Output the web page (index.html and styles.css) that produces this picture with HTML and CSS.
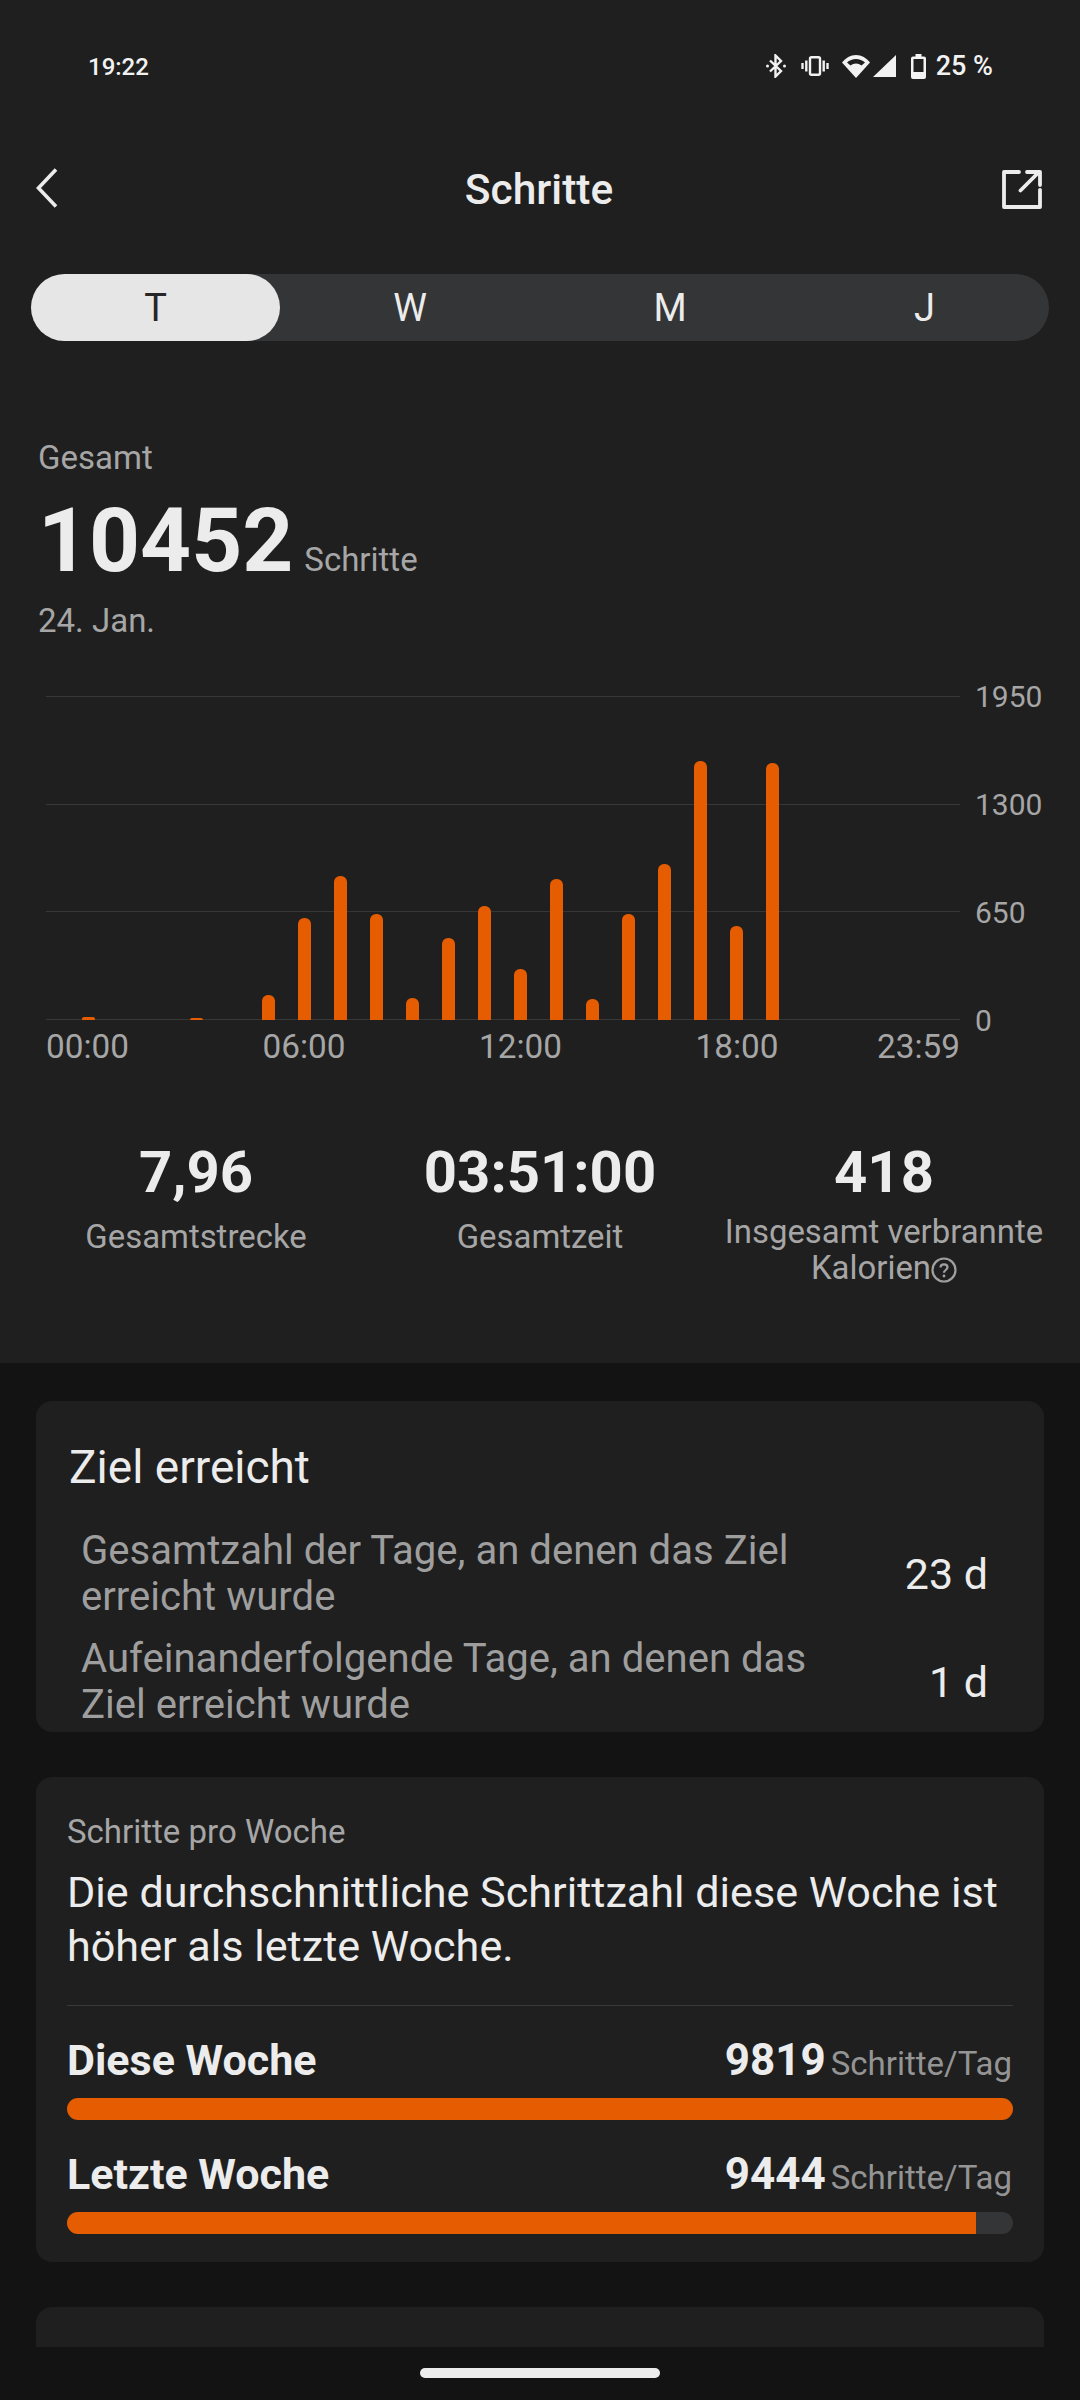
FILE: index.html
```html
<!DOCTYPE html>
<html lang="de">
<head>
    <meta charset="UTF-8">
    <meta name="viewport" content="width=device-width, initial-scale=1.0">
    <title>Schritte</title>
    <link rel="stylesheet" href="styles.css">
</head>
<body>
<div class="page">
    <div class="scroll">
        <section class="top">
            <div class="status-bar">
                <span class="status-time">19:22</span>
                <div class="status-icons">
                    <svg class="ic-bt" viewBox="0 0 20 24" width="20" height="24" fill="none" stroke="#f2f2f2" stroke-width="2.400"><path d="M4 6.500 15 17l-5.500 5.500v-21L15 7 4 17.500"/><circle cx="1.500" cy="12" r="1.500" fill="#f2f2f2" stroke="none"/><circle cx="18.500" cy="12" r="1.500" fill="#f2f2f2" stroke="none"/></svg>
                    <svg class="ic-vib" viewBox="0 0 28 20" width="28" height="20" fill="none" stroke="#f2f2f2" stroke-width="2.400"><rect x="9" y="1.200" width="10" height="17.600" rx="1.500"/><path d="M5.300 4.500v11M22.700 4.500v11M1.500 7v6M26.500 7v6"/></svg>
                    <svg class="ic-wifi" viewBox="0 0 28 23" width="28" height="23"><path d="M14 23 0 7.500C3.500 3 8.500 0 14 0s10.500 3 14 7.500z" fill="#f2f2f2"/><path d="M5 7.500C7.500 5.300 10.600 4 14 4s6.500 1.300 9 3.500L19.500 10.500C17.900 9.200 16 8.500 14 8.500s-3.900.7-5.500 2z" fill="#1f1f1f"/></svg>
                    <svg class="ic-signal" viewBox="0 0 23 22" width="23" height="22"><path d="M23 0v22H0z" fill="#f2f2f2"/></svg>
                    <svg class="ic-batt" viewBox="0 0 15 25" width="15" height="25"><path d="M4.500 0h6v2.500H13a2 2 0 0 1 2 2V23a2 2 0 0 1-2 2H2a2 2 0 0 1-2-2V4.500a2 2 0 0 1 2-2h2.500z" fill="#f2f2f2"/><rect x="2.500" y="5" width="10" height="13" fill="#1f1f1f"/></svg>
                    <span class="status-pct">25 %</span>
                </div>
            </div>

            <header class="title-bar">
                <svg class="back" viewBox="0 0 22 40" width="22" height="40" fill="none" stroke="#ececec" stroke-width="3.600"><path d="M20 1.500 2.500 20 20 38.500"/></svg>
                <h1>Schritte</h1>
                <svg class="share" viewBox="0 0 40 40" width="40" height="40" fill="none" stroke="#ececec" stroke-width="3.800" stroke-linecap="round" stroke-linejoin="round"><path d="M17 3H2v35h36V21M25 3h13v13M37 3 18.500 21.500"/></svg>
            </header>

            <div class="tabs">
                <div class="tab tab-active">T</div>
                <div class="tab tab-w">W</div>
                <div class="tab tab-m">M</div>
                <div class="tab tab-j">J</div>
            </div>

            <div class="summary">
                <div class="summary-label">Gesamt</div>
                <div class="summary-value"><strong>10452</strong><span>Schritte</span></div>
                <div class="summary-date">24. Jan.</div>
            </div>

            <div class="chart">
                <div class="plot">
                    <div class="gridlines"><i></i><i></i><i></i><i></i></div>
                    <div class="bars">
                        <div class="slot"><b class="bar-tiny" style="height:3px"></b></div>
                        <div class="slot"></div>
                        <div class="slot"></div>
                        <div class="slot"><b class="bar-tiny" style="height:2px"></b></div>
                        <div class="slot"></div>
                        <div class="slot"><b style="height:25px"></b></div>
                        <div class="slot"><b style="height:102px"></b></div>
                        <div class="slot"><b style="height:144px"></b></div>
                        <div class="slot"><b style="height:106px"></b></div>
                        <div class="slot"><b style="height:22px"></b></div>
                        <div class="slot"><b style="height:82px"></b></div>
                        <div class="slot"><b style="height:114px"></b></div>
                        <div class="slot"><b style="height:51px"></b></div>
                        <div class="slot"><b style="height:141px"></b></div>
                        <div class="slot"><b style="height:21px"></b></div>
                        <div class="slot"><b style="height:106px"></b></div>
                        <div class="slot"><b style="height:156px"></b></div>
                        <div class="slot"><b style="height:259px"></b></div>
                        <div class="slot"><b style="height:94px"></b></div>
                        <div class="slot"><b style="height:257px"></b></div>
                    </div>
                </div>
                <div class="y-axis">
                    <span>1950</span>
                    <span>1300</span>
                    <span>650</span>
                    <span>0</span>
                </div>
                <div class="x-axis">
                    <span>00:00</span>
                    <span>06:00</span>
                    <span>12:00</span>
                    <span>18:00</span>
                    <span class="x-last">23:59</span>
                </div>
            </div>

            <div class="stats">
                <div class="stat">
                    <div class="stat-value">7,96</div>
                    <div class="stat-label stat-single">Gesamtstrecke</div>
                </div>
                <div class="stat">
                    <div class="stat-value">03:51:00</div>
                    <div class="stat-label stat-single">Gesamtzeit</div>
                </div>
                <div class="stat">
                    <div class="stat-value">418</div>
                    <div class="stat-label">Insgesamt verbrannte Kalorien<svg class="help" viewBox="0 0 26 26" width="26" height="26" fill="none" stroke="#a0a0a0" stroke-width="2.200"><circle cx="13" cy="13" r="11.500"/><path d="M9.500 10.500c0-2 1.500-3.200 3.500-3.200s3.500 1.200 3.500 3c0 2.600-3.500 2.800-3.500 5.400"/><circle cx="13" cy="19" r="1.400" fill="#a0a0a0" stroke="none"/></svg></div>
                </div>
            </div>
        </section>

        <section class="card card-goal">
            <h2>Ziel erreicht</h2>
            <div class="goal-row">
                <div class="goal-text">Gesamtzahl der Tage, an denen das Ziel erreicht wurde</div>
                <div class="goal-value">23 d</div>
            </div>
            <div class="goal-row">
                <div class="goal-text">Aufeinanderfolgende Tage, an denen das Ziel erreicht wurde</div>
                <div class="goal-value">1 d</div>
            </div>
        </section>

        <section class="card card-week">
            <div class="week-label">Schritte pro Woche</div>
            <p class="week-text">Die durchschnittliche Schrittzahl diese Woche ist höher als letzte Woche.</p>
            <div class="divider"></div>
            <div class="week-row">
                <span class="week-name">Diese Woche</span>
                <span class="week-amount"><strong>9819</strong><span>Schritte/Tag</span></span>
            </div>
            <div class="progress"><div class="progress-fill" style="width:100%"></div></div>
            <div class="week-row">
                <span class="week-name">Letzte Woche</span>
                <span class="week-amount"><strong>9444</strong><span>Schritte/Tag</span></span>
            </div>
            <div class="progress"><div class="progress-fill" style="width:96.100%"></div></div>
        </section>

        <section class="card card-next"></section>
    </div>
    <div class="nav-bar"><div class="home-pill"></div></div>
</div>
</body>
</html>
```

FILE: styles.css
```css
* {
    box-sizing: border-box;
}

html, body {
    margin: 0;
    padding: 0;
}

body {
    font-family: Roboto, "Liberation Sans", sans-serif;
    background-color: #131313;
    color: #ececec;
}

.page {
    width: 1080px;
    height: 2400px;
    display: flex;
    flex-direction: column;
    overflow: hidden;
}

.scroll {
    flex: 1;
    min-height: 0;
    overflow: hidden;
}

.top {
    background-color: #1f1f1f;
    height: 1363px;
}

/* status bar */
.status-bar {
    height: 132px;
    padding: 2px 87px 0 88px;
    display: flex;
    align-items: center;
    justify-content: space-between;
    color: #f2f2f2;
    font-size: 24px;
    font-weight: 500;
}

.status-icons {
    display: flex;
    align-items: center;
    margin-top: -2px;
}

.status-icons svg {
    display: block;
}

.ic-bt {
    margin-right: 15px;
}

.ic-vib {
    margin-right: 13px;
}

.ic-wifi {
    margin-right: 3px;
}

.ic-signal {
    margin-right: 15px;
}

.status-pct {
    margin-left: 10px;
    font-size: 27px;
}

/* title */
.title-bar {
    height: 114px;
    padding: 0 38px 0 36px;
    display: grid;
    grid-template-columns: 1fr auto 1fr;
    align-items: center;
}

.title-bar h1 {
    margin: 0;
    font-size: 42.500px;
    font-weight: 500;
}

.back {
    margin-top: -2px;
}

.share {
    justify-self: end;
}

/* period tabs */
.tabs {
    margin: 28px 31px 0;
    height: 67px;
    border-radius: 34px;
    background-color: #343536;
    display: flex;
    font-size: 38px;
    line-height: 69px;
    text-align: center;
}

.tab {
    color: #ececec;
}

.tab-active {
    width: 249px;
    border-radius: 34px;
    background-color: #e6e6e6;
    color: #262626;
}

.tab-w {
    width: 260px;
}

.tab-m {
    width: 260px;
}

.tab-j {
    width: 249px;
}

/* summary */
.summary {
    margin: 99px 38px 0;
}

.summary-label {
    font-size: 33px;
    line-height: 36px;
    color: #a6a6a6;
}

.summary-value {
    margin-top: 15px;
    height: 100px;
    line-height: 100px;
    display: flex;
    align-items: baseline;
    gap: 11px;
}

.summary-value strong {
    font-size: 89px;
    font-weight: 700;
    color: #ececec;
}

.summary-value span {
    font-size: 33px;
    color: #a6a6a6;
}

.summary-date {
    margin-top: 12px;
    font-size: 33px;
    line-height: 36px;
    color: #a6a6a6;
}

/* chart */
.chart {
    margin: 57px 0 0 46px;
    display: grid;
    grid-template-columns: 914px auto;
    column-gap: 15px;
    color: #a6a6a6;
}

.plot {
    position: relative;
    height: 324px;
}

.gridlines {
    height: 100%;
    display: flex;
    flex-direction: column;
    justify-content: space-between;
}

.gridlines i {
    display: block;
    height: 1px;
    background-color: #363737;
}

.bars {
    position: absolute;
    top: 0;
    bottom: 0;
    left: 24px;
    display: flex;
    align-items: flex-end;
}

.slot {
    width: 36px;
    display: flex;
    justify-content: center;
}

.slot b {
    display: block;
    width: 13px;
    border-radius: 6px 6px 0 0;
    background-color: #e65c00;
}

.slot b.bar-tiny {
    border-radius: 2px 2px 0 0;
}

.y-axis {
    height: 324px;
    display: flex;
    flex-direction: column;
    justify-content: space-between;
    font-size: 30px;
    line-height: 34px;
}

.y-axis span {
    display: block;
    height: 0;
    transform: translateY(-16px);
}

.x-axis {
    grid-column: 1;
    margin-top: 8px;
    display: grid;
    grid-template-columns: repeat(3, 216.500px) 1fr auto;
    font-size: 33.300px;
    line-height: 38px;
}

/* totals */
.stats {
    margin: 71px 24px 0;
    display: grid;
    grid-template-columns: repeat(3, 344px);
    text-align: center;
}

.stat-value {
    font-size: 58px;
    font-weight: 700;
    line-height: 70px;
    color: #ececec;
}

.stat-label {
    margin-top: 7px;
    padding: 0 10px;
    font-size: 32.900px;
    line-height: 36px;
    color: #a6a6a6;
}

.stat-single {
    padding-top: 5px;
}

.help {
    vertical-align: -4px;
}

/* cards */
.card {
    margin: 45px 36px 0;
    border-radius: 16px;
    background-color: #1f1f1f;
    overflow: hidden;
}

.card-goal {
    margin-top: 38px;
    height: 331px;
    padding: 40px 56px 0 33px;
}

.card-goal h2 {
    margin: 0 0 35px;
    font-size: 46px;
    font-weight: 400;
    line-height: 52px;
    color: #ececec;
}

.goal-row {
    padding-left: 12px;
    margin-bottom: 16px;
    display: flex;
    align-items: center;
    justify-content: space-between;
}

.goal-text {
    width: 740px;
    font-size: 40.100px;
    line-height: 46px;
    color: #9e9e9e;
}

.goal-value {
    font-size: 43px;
    line-height: 46px;
    color: #ececec;
}

.card-week {
    height: 485px;
    padding: 37px 31px 0;
}

.week-label {
    font-size: 33px;
    line-height: 36px;
    color: #a6a6a6;
}

.week-text {
    margin: 16px 0 0;
    font-size: 43.150px;
    line-height: 54px;
    color: #ececec;
}

.divider {
    margin-top: 31px;
    height: 1px;
    background-color: #3a3a3a;
}

.week-row {
    margin-top: 29px;
    height: 50px;
    line-height: 50px;
    display: flex;
    align-items: baseline;
    justify-content: space-between;
}

.week-name {
    font-size: 43px;
    font-weight: 700;
    color: #ececec;
}

.week-amount {
    display: flex;
    align-items: baseline;
    gap: 5px;
    margin-right: 1px;
}

.week-amount strong {
    font-size: 44px;
    font-weight: 700;
    color: #ececec;
}

.week-amount span {
    font-size: 33px;
    color: #949494;
}

.progress {
    margin-top: 13px;
    height: 22px;
    border-radius: 11px;
    background-color: #343536;
    overflow: hidden;
}

.progress-fill {
    height: 100%;
    background-color: #e65c00;
}

.card-next {
    height: 80px;
}

/* gesture bar */
.nav-bar {
    height: 53px;
    padding-top: 21px;
    background-color: #131313;
}

.home-pill {
    width: 240px;
    height: 10px;
    margin: 0 auto;
    border-radius: 5px;
    background-color: #ececec;
}
```
